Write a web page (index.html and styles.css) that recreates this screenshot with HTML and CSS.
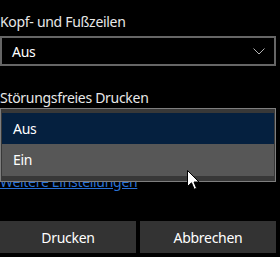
FILE: index.html
```html
<!DOCTYPE html>
<html lang="de">
<head>
<meta charset="utf-8">
<link rel="stylesheet" href="styles.css">
</head>
<body>
<div class="panel">
  <div class="label label-first">Kopf- und Fußzeilen</div>
  <div class="select">
    <span>Aus</span>
    <svg class="chev" width="12" height="7" viewBox="0 0 12 7"><polyline points="0.5,0.5 6,6 11.5,0.5" fill="none" stroke="#b4b4b4" stroke-width="1"/></svg>
  </div>

  <div class="label label-second">Störungsfreies Drucken</div>
  <div class="select-wrap">
    <div class="select"><span>Aus</span></div>
    <div class="popup">
      <div class="option selected">Aus</div>
      <div class="option hover">Ein</div>
    </div>
  </div>

  <a class="link" href="#">Weitere Einstellungen</a>

  <div class="buttons">
    <button class="btn">Drucken</button>
    <button class="btn">Abbrechen</button>
  </div>

  <svg class="cursor" width="13" height="21" viewBox="0 0 13 21">
    <path d="M0.5,0.5 L0.5,16.5 L4.5,12.8 L7.2,19.3 L9.6,18.3 L7,12 L12,12 Z" fill="#fff" stroke="#000" stroke-width="1" stroke-linejoin="miter"/>
  </svg>
</div>
</body>
</html>
```

FILE: styles.css
```css
html, body {
  margin: 0;
  padding: 0;
  background: #000;
}
body {
  width: 280px;
  height: 257px;
  overflow: hidden;
  font-family: "Noto Sans", "Open Sans", sans-serif;
  font-size: 14px;
  letter-spacing: -0.3px;
  color: #fff;
}
.panel {
  position: relative;
  width: 276px;
  display: flex;
  flex-direction: column;
}
.label {
  height: 20px;
  line-height: 20px;
  color: #e8e8e8;
  white-space: nowrap;
}
.label-first { margin-top: 12px; }
.label-second { margin-top: 22px; }
.select {
  box-sizing: border-box;
  margin-top: 4px;
  height: 30px;
  border: 2px solid #666;
  display: flex;
  align-items: center;
  justify-content: space-between;
  padding: 0 9px 0 10px;
  color: #fff;
}
.chev { display: block; margin-top: 1px; }
.select-wrap {
  position: relative;
}
.popup {
  position: absolute;
  left: 0;
  top: 0;
  width: 276px;
  box-sizing: border-box;
  border: 1px solid #7e7e7e;
  background: #383838;
  padding: 4px 1px 5px 1px;
}
.option {
  height: 31px;
  line-height: 31px;
  padding-left: 11px;
  color: #fff;
}
.option.selected { background: #05203f; }
.option.hover { background: #575757; height: 32px; line-height: 32px; }
.link {
  margin-top: 30px;
  height: 20px;
  line-height: 20px;
  color: #2a72d6;
  text-decoration: underline;
  align-self: flex-start;
}
.buttons {
  margin-top: 29px;
  display: flex;
  gap: 4px;
}
.btn {
  flex: 1;
  height: 32px;
  border: none;
  background: #333;
  color: #fff;
  font-family: inherit;
  font-size: 14px;
  letter-spacing: -0.3px;
  padding: 0;
}
.cursor {
  position: absolute;
  left: 187px;
  top: 170px;
}
```
